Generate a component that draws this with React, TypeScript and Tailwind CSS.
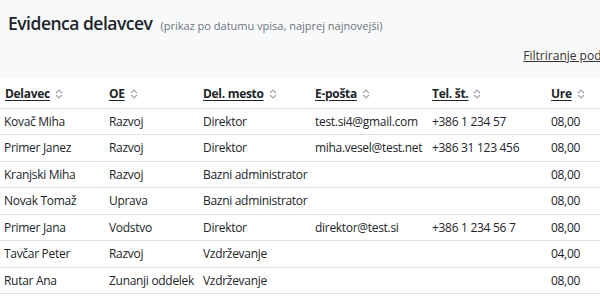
import React from 'react';

const rows = [
  { name: 'Kovač Miha', oe: 'Razvoj', mesto: 'Direktor', email: 'test.si4@gmail.com', tel: '+386 1 234 57', ure: '08,00' },
  { name: 'Primer Janez', oe: 'Razvoj', mesto: 'Direktor', email: 'miha.vesel@test.net', tel: '+386 31 123 456', ure: '08,00' },
  { name: 'Kranjski Miha', oe: 'Razvoj', mesto: 'Bazni administrator', email: '', tel: '', ure: '08,00' },
  { name: 'Novak Tomaž', oe: 'Uprava', mesto: 'Bazni administrator', email: '', tel: '', ure: '08,00' },
  { name: 'Primer Jana', oe: 'Vodstvo', mesto: 'Direktor', email: 'direktor@test.si', tel: '+386 1 234 56 7', ure: '08,00' },
  { name: 'Tavčar Peter', oe: 'Razvoj', mesto: 'Vzdrževanje', email: '', tel: '', ure: '04,00' },
  { name: 'Rutar Ana', oe: 'Zunanji oddelek', mesto: 'Vzdrževanje', email: '', tel: '', ure: '08,00' },
];

const columns = ['Delavec', 'OE', 'Del. mesto', 'E-pošta', 'Tel. št.', 'Ure'];

const SortIcon: React.FC = () => (
  <svg width="8" height="10" viewBox="0 0 8 10" className="ml-[5px] inline-block align-[-1px]">
    <path d="M1 4 L4 1 L7 4 M1 6 L4 9 L7 6" fill="none" stroke="#9ca3af" strokeWidth="1.1" />
  </svg>
);

export default function App() {
  return (
    <div className="w-[600px] h-[296px] overflow-hidden bg-white text-[#212529] font-['Open_Sans',sans-serif]">
      {/* Page header */}
      <div className="bg-[#f8f9fa] h-[78px] px-[8px] pt-[10px]">
        <div className="flex items-baseline gap-[8px]">
          <h1 className="text-[17.5px] font-semibold leading-[26px] tracking-[-0.5px]">Evidenca delavcev</h1>
          <span className="text-[11px] text-[#6c757d]">(prikaz po datumu vpisa, najprej najnovejši)</span>
        </div>
        <div className="flex justify-end mt-[11px] -mr-[40px]">
          <a className="text-[12px] text-[#333] underline whitespace-nowrap">Filtriranje podatkov</a>
        </div>
      </div>

      {/* Table */}
      <table className="table-fixed border-collapse w-[640px] text-[12px] tracking-[-0.3px]">
        <colgroup>
          <col className="w-[104px]" />
          <col className="w-[94px]" />
          <col className="w-[112px]" />
          <col className="w-[117px]" />
          <col className="w-[119px]" />
          <col className="w-[94px]" />
        </colgroup>
        <thead>
          <tr className="border-b border-[#dee2e6] h-[30px]">
            {columns.map((c) => (
              <th key={c} className="text-left font-bold px-[5px] pt-[2px] whitespace-nowrap">
                <span className="underline underline-offset-2">{c}</span>
                <SortIcon />
              </th>
            ))}
          </tr>
        </thead>
        <tbody>
          {rows.map((r) => (
            <tr key={r.name} className="border-b border-[#dee2e6]">
              <td className="px-[4px] py-[5px] leading-[15.5px] whitespace-nowrap">{r.name}</td>
              <td className="px-[5px] py-[5px] leading-[15.5px] whitespace-nowrap">{r.oe}</td>
              <td className="px-[5px] py-[5px] leading-[15.5px] whitespace-nowrap">{r.mesto}</td>
              <td className="px-[5px] py-[5px] leading-[15.5px] whitespace-nowrap">{r.email}</td>
              <td className="px-[5px] py-[5px] leading-[15.5px] whitespace-nowrap">{r.tel}</td>
              <td className="px-[5px] py-[5px] leading-[15.5px] whitespace-nowrap">{r.ure}</td>
            </tr>
          ))}
        </tbody>
      </table>
    </div>
  );
}
